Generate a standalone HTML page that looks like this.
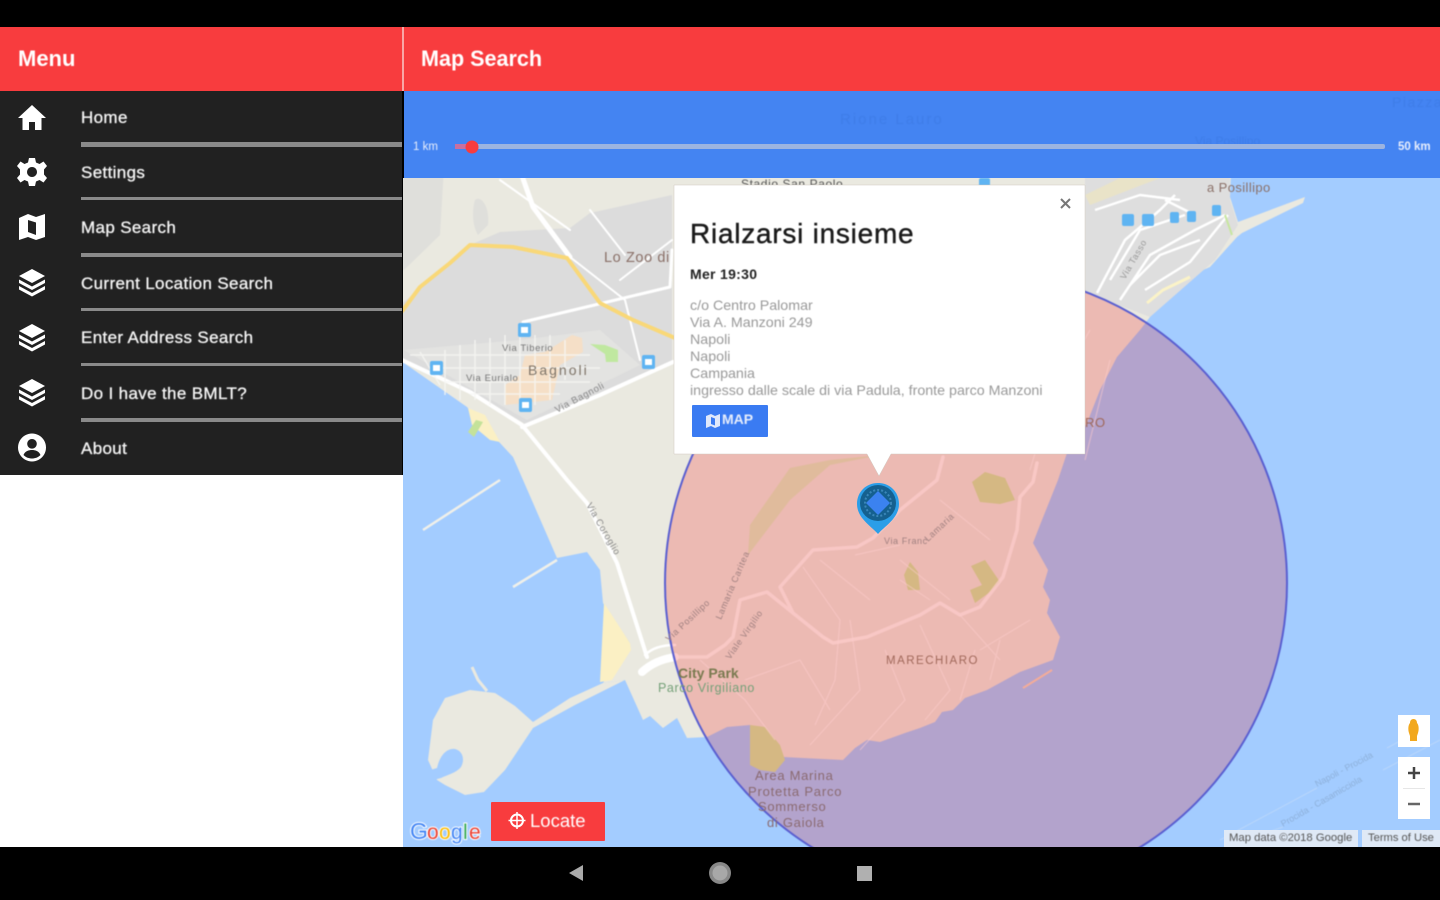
<!DOCTYPE html>
<html><head><meta charset="utf-8"><style>
html,body{margin:0;padding:0;background:#000}
#p{position:relative;width:1440px;height:900px;overflow:hidden;background:#000;font-family:"Liberation Sans",sans-serif}
.a{position:absolute}
.t{position:absolute;white-space:nowrap;filter:blur(.5px)}
.m{left:81px;color:#f6f6f6;font-size:17px;line-height:20px;letter-spacing:.35px;-webkit-text-stroke:.3px #f6f6f6}
.d{position:absolute;left:81px;width:321px;background:#8a8a8a}
.l{left:690px;color:#999;font-size:14.25px;line-height:17px}
svg{position:absolute;left:0;top:0}
svg text{font-family:"Liberation Sans",sans-serif}
</style></head><body><div id="p">
<div class="a" style="left:0;top:27px;width:402px;height:64px;background:#f83c3e"></div>
<div class="a" style="left:404px;top:27px;width:1036px;height:64px;background:#f83c3e"></div>
<div class="a" style="left:402px;top:27px;width:2px;height:64px;background:#f9a6a6"></div>
<div class="t" style="left:18px;top:46px;color:#fff;font-size:22px;line-height:26px;font-weight:bold">Menu</div>
<div class="t" style="left:421px;top:46px;color:#fff;font-size:22px;line-height:26px;font-weight:bold;transform:scaleX(.98);transform-origin:left">Map Search</div>
<div class="a" style="left:0;top:91px;width:402px;height:384px;background:#212121"></div>
<div class="a" style="left:0;top:475px;width:403px;height:372px;background:#fff"></div>
<div class="d" style="top:142px;height:5px"></div>
<div class="d" style="top:197px;height:3px"></div>
<div class="d" style="top:253px;height:4px"></div>
<div class="d" style="top:308px;height:3px"></div>
<div class="d" style="top:363px;height:3px"></div>
<div class="d" style="top:418px;height:4px"></div>
<div class="t m" style="top:108px">Home</div>
<div class="t m" style="top:163px">Settings</div>
<div class="t m" style="top:218px">Map Search</div>
<div class="t m" style="top:274px">Current Location Search</div>
<div class="t m" style="top:328px">Enter Address Search</div>
<div class="t m" style="top:384px">Do I have the BMLT?</div>
<div class="t m" style="top:439px">About</div>

<svg width="1440" height="900" viewBox="0 0 1440 900">
<defs><clipPath id="mc"><rect x="403" y="178" width="1037" height="669"/></clipPath></defs>
<g fill="#fff">
<path d="M32 105 L46 118 L41.500 118 L41.500 130 L35 130 L35 122 L29 122 L29 130 L22.500 130 L22.500 118 L18 118Z"/>
<path fill-rule="evenodd" d="M29 158H35L36 162.500L39.500 164L43.500 161.500L47 166L44 169.500V174.500L47 178L43.500 182.500L39.500 180L36 181.500L35 186H29L28 181.500L24.500 180L20.500 182.500L17 178L20 174.500V169.500L17 166L20.500 161.500L24.500 164L28 162.500ZM32 167A5 5 0 1 0 32.010 167Z"/>
<path fill-rule="evenodd" d="M19 218L28 214L36 217L45 214V237L36 240L28 237L19 240ZM28 220V232L36 235V222.500Z"/>
<g id="st"><path d="M32 269L45 276L32 283L19 276Z"/><path d="M19 279.500L32 286.500L45 279.500V283L32 290L19 283Z"/><path d="M19 286L32 293L45 286V289.500L32 296.500L19 289.500Z"/></g>
<use href="#st" y="55"/><use href="#st" y="110"/>
<path fill-rule="evenodd" d="M32 433.500A14 14 0 1 0 32.010 433.500ZM32 439A4.800 4.800 0 1 1 31.990 439ZM23.500 455C25 451 29 450 32 450C35 450 39 451 40.500 455C38 457.500 35 458.500 32 458.500C29 458.500 26 457.500 23.500 455Z"/>
</g>

<g clip-path="url(#mc)"><g style="filter:blur(.6px)">
<rect x="380" y="150" width="1090" height="720" fill="#a3ccff"/>
<path fill="#eae9e0" d="M380 150V363H404L467 407L500 443L513 457L557 558L587 552L600 570L603 603L630 643L603 683L625 680L643 720L650 716L663 728L677 718L687 738L707 737L727 727L750 725L783 757L843 760L855 748L867 740L880 742L905 733L920 728L935 722L942 712L953 710L965 698L987 690L1020 672L1053 660L1060 637L1047 613L1050 600L1043 587L1048 570L1033 543L1040 525L1050 500L1058 480L1067 453L1087 423L1100 390L1117 357L1140 330L1150 317L1147 303L1163 287L1187 277L1210 267L1237 237L1242 233L1303 203L1305 197L1238 222L1230 197L1232 150Z"/>
<path fill="#eae9e0" d="M603 683L570 698L533 722L515 706L495 693L470 690L445 698L433 720L428 760L437 780L445 785L465 795L484 792L505 770L533 728L575 705L625 680Z"/>
<path fill="#a3ccff" d="M424 772L437 768C440 755 447 748 455 749C463 751 465 760 461 767C456 773 447 775 441 778L426 782Z"/>
<path fill="none" stroke="#eae9e0" stroke-width="3" d="M472 667L478 680L487 691"/>
<path fill="none" stroke="#f0f0ea" stroke-width="2.500" d="M423 530L500 480M513 587L557 560"/>
<path fill="#fbf0c4" d="M604 603L630 643L631 650L612 680L600 682Z"/>
<path fill="#fbf0c4" d="M468 408L485 415L500 442L490 440L472 425Z"/>
<path fill="#c4e29a" d="M476 420L483 422L474 437L468 432Z"/>
<path fill="#dcdcdc" d="M380 302H404L450 263L470 245L500 232L570 228L590 213L672 195V361L527 425L510 415L470 392L404 360H380Z"/>
<path fill="#dfdfdb" d="M380 150H445L440 235L404 270H380Z"/>
<path fill="#dfdfdb" d="M475 200C480 195 490 205 488 225L478 235C472 225 472 210 475 200Z"/>
<path fill="#e3e3e1" d="M404 350L520 340L600 330L640 365L527 420L470 388Z"/>
<path fill="#dedede" d="M1085 150H1230V200L1238 225L1215 260L1150 317L1085 292Z"/>
<path fill="#e9e3c8" d="M1085 195L1120 178H1160L1090 205Z"/>
<path fill="#f5dfc7" d="M525 355L545 352L572 335L582 338L583 352L560 365L552 400L505 405L505 385L520 375Z"/>
<path fill="#c0e8a0" d="M590 344L605 345L618 350L618 362L606 362L605 354Z"/>
<g fill="none" stroke="#fff" stroke-linecap="round" stroke-linejoin="round">
<path stroke-width="5" d="M520 170L533 207L570 257"/>
<path stroke-width="4" d="M380 350L404 361L470 392L522 425L567 480L587 503L617 563L647 657"/>
<path stroke-width="4" d="M522 427L600 395L673 362"/>
<path stroke-width="3" d="M523 322L603 303L670 287L672 250"/>
<path stroke-width="2" d="M570 257L625 300L640 360M625 255L590 210M620 280L672 240M500 180L570 230"/>
<path stroke-width="8" d="M642 672Q655 660 675 657"/>
<path stroke-width="2.500" d="M645 655Q655 645 675 645"/>
</g>
<g fill="none" stroke="#f6f6f4" stroke-width="1.500" opacity=".8">
<path d="M420 352L440 385M445 350V395M460 345V400M475 340V400M490 338V405M505 335V405M520 335V405M535 335V405M550 335V400M565 340V380M410 355H590M430 368H600M445 382H590M470 394H560"/>
</g>
<path fill="none" stroke="#f9d878" stroke-width="4" stroke-linejoin="round" d="M380 335L403 310L420 287L450 263L470 245L513 247L567 258L600 303L633 320L675 338"/>
<g fill="none" stroke="#fff" stroke-width="2.500" stroke-linejoin="round">
<path d="M1097 293L1125 240L1160 210L1175 195M1120 300L1150 255L1195 230L1225 215M1145 290L1190 262L1228 215M1110 280L1140 230L1185 215M1130 285L1160 255L1200 240M1095 210L1140 195L1180 200M1165 200L1195 215"/>
</g>
<path fill="none" stroke="#fbf3c8" stroke-width="3" d="M1147 303L1163 290L1190 277"/>
<path fill="none" stroke="#c8e6a0" stroke-width="2" d="M1225 215L1232 235"/>
<path fill="#c9eba0" d="M748 555L790 500L830 465L880 455L830 460L790 468L750 525Z" opacity=".45"/>
<path fill="#cde7a4" d="M972 482L985 472L1005 478L1015 500L1000 504L980 502Z"/>
<path fill="#cde7a4" d="M971 566L985 560L1000 582L990 592L975 603L970 590L982 585Z"/>
<path fill="#cde7a4" d="M910 562L918 572L920 590L908 590L904 575Z"/>
<path fill="#cde7a4" d="M750 725L765 727L780 745L785 760L775 772L760 770L750 765Z"/>
<g fill="none" stroke="#fff" stroke-width="3.500" stroke-linecap="round" stroke-linejoin="round" opacity=".75">
<path d="M677 657L707 657L725 645L733 637L740 600L767 592L793 613L823 637L833 643L867 637L920 615L940 603L960 615L980 607L1003 577L1017 530L1020 497L1033 482L1037 463"/>
<path d="M793 613L780 587L813 550L857 547L873 538L900 510L937 480L943 457"/>
</g>
<g fill="none" stroke="#fff" stroke-width="1.300" opacity=".5">
<path d="M803 567L840 620L835 680L815 725M850 620L860 690L810 745M885 650L905 700L860 750M920 625L950 690L925 720M960 615L1000 660M820 560L870 600M900 560L950 600M980 650L1030 620M745 680L800 660L830 710M1030 470L1060 370M1085 460L1110 360M700 660L745 700L775 740M940 500L990 540M900 580L930 600M855 555L900 545"/>
<path d="M990 680L1000 640M960 700L975 650M1050 400L1090 330M1040 440L1070 410"/>
</g>
<path fill="none" stroke="#f4d8c0" stroke-width="2" d="M1023 688L1052 670"/>
<circle cx="976" cy="583" r="311" fill="rgb(244,0,0)" fill-opacity=".2" stroke="#5a5fd0" stroke-width="2"/>
<g font-size="15" letter-spacing=".6" stroke-width=".3">
<text x="604" y="262" fill="#8a7068" font-size="14.500">Lo Zoo di</text>
<text x="528" y="375" font-size="14" letter-spacing="2" fill="#7e7468">Bagnoli</text>
<text x="502" y="351" font-size="9.500" fill="#777">Via Tiberio</text>
<text x="466" y="381" font-size="9.500" fill="#777">Via Eurialo</text>
<text x="1207" y="192" font-size="13" letter-spacing=".4" fill="#8a7068">a Posillipo</text>
<text x="886" y="664" font-size="11.500" letter-spacing="1.500" fill="#a0685a">MARECHIARO</text>
<text x="1085" y="427" font-size="13" fill="#a0685a">RO</text>
<text x="678" y="678" font-size="14" font-weight="bold" letter-spacing="0" fill="#7a7a50">City Park</text>
<text x="658" y="692" font-size="12.500" fill="#74a078">Parco Virgiliano</text>
<text x="755" y="780" font-size="13" letter-spacing=".7" fill="#8a6a70">Area Marina</text>
<text x="748" y="796" font-size="13" letter-spacing=".8" fill="#8a6a70">Protetta Parco</text>
<text x="758" y="811" font-size="13" letter-spacing=".7" fill="#8a6a70">Sommerso</text>
<text x="767" y="827" font-size="13" letter-spacing=".7" fill="#8a6a70">di Gaiola</text>
<text x="741" y="188" font-size="12" fill="#555">Stadio San Paolo</text>
<text font-size="9.500" fill="#888" transform="translate(557 413) rotate(-28)">Via Bagnoli</text>
<text font-size="9.500" fill="#888" transform="translate(586 505) rotate(60)">Via Coroglio</text>
<text font-size="9" fill="#a08080" transform="translate(669 642) rotate(-43)">Via Posillipo</text>
<text font-size="9" fill="#a08080" transform="translate(721 620) rotate(-67)">Lamaria Caritea</text>
<text font-size="9" fill="#a08080" transform="translate(730 660) rotate(-55)">Viale Virgilio</text>
<text font-size="9" fill="#a08080" transform="translate(884 544)">Via Franc</text>
<text font-size="9" fill="#a08080" transform="translate(928 542) rotate(-43)">Lamaria</text>
<text font-size="9" fill="#999" transform="translate(1125 280) rotate(-60)">Via Tasso</text>
<text font-size="9" letter-spacing="0" fill="#8db0da" transform="translate(1317 787) rotate(-28)">Napoli - Procida</text>
<text font-size="9" letter-spacing="0" fill="#8db0da" transform="translate(1283 827) rotate(-30)">Procida - Casamicciola</text>
<path fill="none" stroke="#b8d6fb" stroke-width="1" d="M1220 840L1317 788M1387 748L1430 725M1230 845L1283 827M1383 770L1440 740"/>
</g>
<g fill="#5fb4f2">
<rect x="518" y="323" width="13" height="14" rx="2"/><rect x="430" y="361" width="13" height="14" rx="2"/><rect x="642" y="355" width="13" height="14" rx="2"/><rect x="519" y="398" width="13" height="14" rx="2"/>
<rect x="1122" y="214" width="12" height="12" rx="2"/><rect x="1142" y="214" width="12" height="12" rx="2"/><rect x="1170" y="212" width="9" height="11" rx="2"/><rect x="1187" y="211" width="9" height="11" rx="2"/><rect x="1212" y="205" width="9" height="11" rx="2"/><rect x="979" y="178" width="11" height="9" rx="2"/>
</g>
<g fill="#fff"><rect x="521" y="327" width="7" height="6"/><rect x="433" y="365" width="7" height="6"/><rect x="645" y="359" width="7" height="6"/><rect x="522" y="402" width="7" height="6"/></g>
</g></g>

<rect x="404" y="91" width="1036" height="87" fill="#4484f2"/>
<text x="840" y="124" font-size="15" letter-spacing="2" fill="#3f7de8" style="filter:blur(.5px)">Rione Lauro</text>
<text x="1392" y="107" font-size="14" letter-spacing="1.500" fill="#3f7de8" style="filter:blur(.5px)">Piazza</text>
<text x="1195" y="145" font-size="12" fill="#3f7de8" style="filter:blur(.5px)">Via Posillipo</text>
<rect x="455" y="144" width="930" height="5" rx="2" fill="#9cb4e0"/>
<rect x="455" y="144" width="16" height="5" fill="#c870a0"/>
<circle cx="472" cy="147" r="6.500" fill="#f83c3e"/>
<text x="413" y="150" font-size="11.500" fill="#e8eefc" style="filter:blur(.4px)">1 km</text>
<text x="1398" y="150" font-size="11.500" font-weight="bold" fill="#e8eefc" style="filter:blur(.4px)">50 km</text>

<path d="M674 185H1085V454H891L879 476L867 454H674Z" fill="#fff" stroke="#d0c8c0" stroke-width=".5"/>
<path d="M1061 199L1070 208M1070 199L1061 208" stroke="#777" stroke-width="2"/>

<path d="M878 483C866 483 857 492 857 504C857 518 871 526 878 534C885 526 899 518 899 504C899 492 890 483 878 483Z" fill="#2b9ee8"/>
<circle cx="878" cy="503" r="18" fill="#15608f"/>
<circle cx="878" cy="503" r="13" fill="none" stroke="#3a86b8" stroke-width="2" stroke-dasharray="2 2"/>
<path d="M878 491L890 503L878 515L866 503Z" fill="#3b82f0"/>

<rect x="692" y="405" width="76" height="32" rx="1" fill="#3a7bf2"/>
<path fill-rule="evenodd" d="M706 416L711 414L715 416L720 414V426L715 428L711 426L706 428ZM711 417V424L715 425.500V418.500Z" fill="#dfe8fb"/>
<rect x="491" y="802" width="114" height="39" rx="1" fill="#f83c3e"/>
<circle cx="517" cy="820.500" r="6" fill="none" stroke="#fff" stroke-width="2"/>
<path d="M517 812V829M508.500 820.500H525.500" stroke="#fff" stroke-width="1.500"/>
<text x="530" y="827" font-size="18.500" fill="#fff" style="filter:blur(.4px)">Locate</text>

<g font-size="21" style="filter:blur(.5px)" stroke="#fff" stroke-width="2" paint-order="stroke">
<text x="410" y="839" fill="#4285f4" font-size="23">G</text><text x="427" y="839" fill="#ea4335">o</text><text x="439" y="839" fill="#fbbc05">o</text><text x="451" y="839" fill="#4285f4">g</text><text x="463" y="839" fill="#34a853">l</text><text x="469" y="839" fill="#ea4335">e</text>
</g>

<rect x="1398" y="715" width="32" height="32" fill="#fff"/>
<path d="M1413.500 719C1416 719 1417 721 1417 723C1419 725 1419 730 1418 733L1417 736L1417 741H1410V736L1409 733C1408 730 1408 725 1410 723C1410 721 1411 719 1413.500 719Z" fill="#f2a81e"/>
<rect x="1398" y="757" width="32" height="62" fill="#fff"/>
<rect x="1403" y="788" width="22" height="1" fill="#e6e6e6"/>
<path d="M1414 767V779M1408 773H1420" stroke="#444" stroke-width="2.500"/>
<path d="M1408 804H1420" stroke="#666" stroke-width="2.500"/>
<rect x="1224" y="830" width="134" height="17" fill="#dfe9f6"/>
<rect x="1362" y="830" width="78" height="17" fill="#dfe9f6"/>
<text x="1229" y="841" font-size="11.300" fill="#555" style="filter:blur(.4px)">Map data ©2018 Google</text>
<text x="1368" y="841" font-size="11.200" fill="#555" style="filter:blur(.4px)">Terms of Use</text>

<path d="M583 865V881L569 873Z" fill="#aaa"/>
<circle cx="720" cy="873" r="11" fill="#888"/><circle cx="720" cy="873" r="7.500" fill="#a8a8a8"/>
<rect x="857" y="866" width="15" height="15" fill="#b0b0b0"/>
</svg>

<div class="t" style="left:690px;top:217px;color:#1a1a1a;font-size:28px;line-height:33px;letter-spacing:.75px;-webkit-text-stroke:.4px #1a1a1a">Rialzarsi insieme</div>
<div class="t" style="left:690px;top:266px;color:#222;font-size:14px;line-height:16px;font-weight:bold;letter-spacing:.3px">Mer 19:30</div>
<div class="t l" style="top:298px">c/o Centro Palomar</div>
<div class="t l" style="top:315px">Via A. Manzoni 249</div>
<div class="t l" style="top:332px">Napoli</div>
<div class="t l" style="top:349px">Napoli</div>
<div class="t l" style="top:366px">Campania</div>
<div class="t l" style="top:383px">ingresso dalle scale di via Padula, fronte parco Manzoni</div>
<div class="t" style="left:722px;top:411px;color:#e6edfc;font-size:14px;line-height:17px;font-weight:bold">MAP</div>
</div></body></html>
